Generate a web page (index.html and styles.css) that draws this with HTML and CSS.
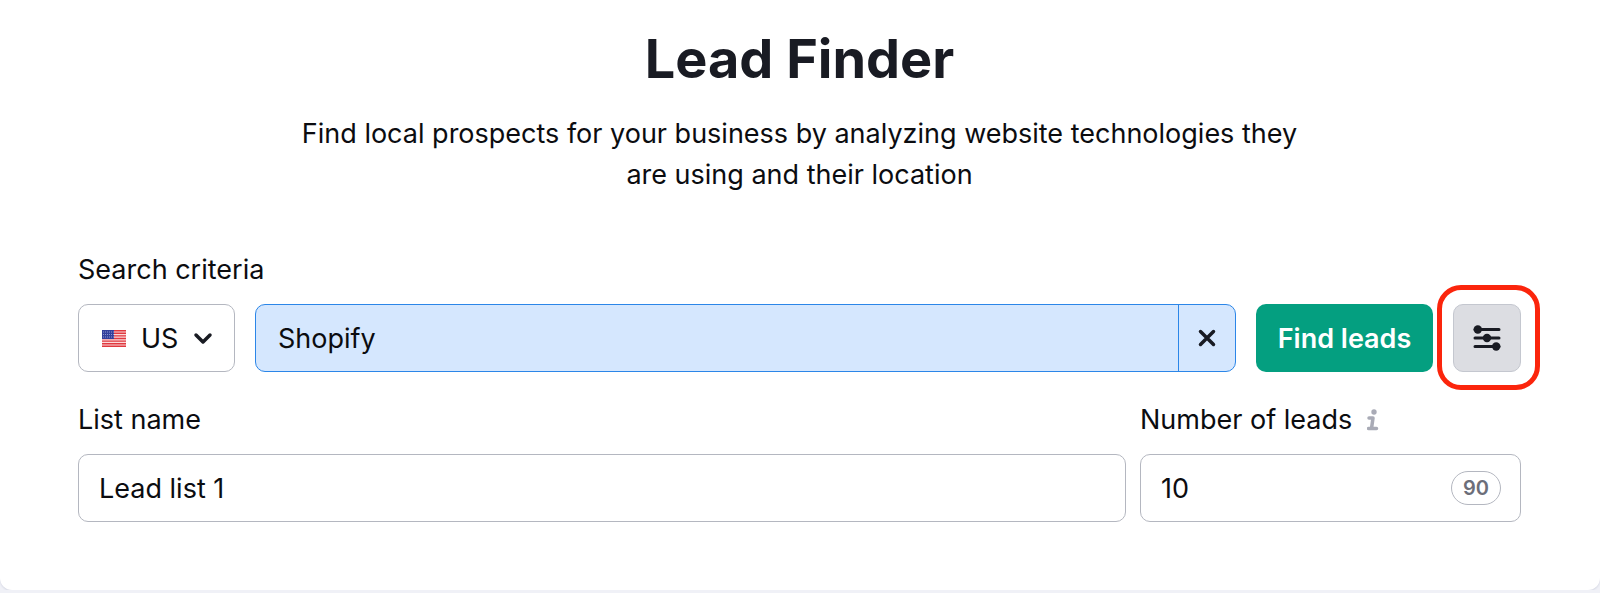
FILE: index.html
```html
<!DOCTYPE html>
<html lang="en">
<head>
<meta charset="utf-8">
<meta name="viewport" content="width=device-width, initial-scale=1">
<title>Lead Finder</title>
<link rel="stylesheet" href="styles.css">
</head>
<body>
<main class="card">
  <header class="intro">
    <h1 class="title">Lead Finder</h1>
    <p class="subtitle">Find local prospects for your business by analyzing website technologies they are using and their location</p>
  </header>
  <form class="form">
    <div class="field">
      <label class="label" for="criteria">Search criteria</label>
      <div class="search-row">
        <div class="country">
          <svg class="flag" viewBox="0 0 24 17" aria-hidden="true">
            <rect width="24" height="17" fill="#fbd9da"/>
            <path d="M0 .7h24M0 3.300h24M0 5.900h24M0 8.500h24M0 11.100h24M0 13.700h24M0 16.300h24" stroke="#e0393f" stroke-width="1.4"/>
            <rect width="12" height="9" fill="#34409c"/>
            <path d="M1 2h11M1 4.500h11M1 7h11" stroke="#8d97cf" stroke-width="1" stroke-dasharray="1 1"/>
          </svg>
          <select class="control country-select" aria-label="Country">
            <option>US</option>
          </select>
          <svg class="chevron" viewBox="0 0 20 14" aria-hidden="true"><path d="M3 3l7 7 7-7"/></svg>
        </div>
        <div class="criteria">
          <input class="criteria-input" id="criteria" type="text" value="Shopify">
          <button class="clear" type="button" aria-label="Clear">
            <svg class="clear-icon" viewBox="0 0 20 20" aria-hidden="true"><path d="M3.500 3.500l13 13M16.500 3.500l-13 13"/></svg>
          </button>
        </div>
        <button class="find" type="submit">Find leads</button>
        <div class="settings-wrap">
          <button class="settings" type="button" aria-label="Settings">
            <svg class="settings-icon" viewBox="0 0 28 28" aria-hidden="true">
              <path d="M2 5.500h24M2 14h24M2 22.500h24"/>
              <circle cx="4.800" cy="5.500" r="4.200"/><circle cx="14" cy="14" r="4.200"/><circle cx="23.200" cy="22.500" r="4.200"/>
            </svg>
          </button>
          <span class="highlight"></span>
        </div>
      </div>
    </div>
    <div class="details-row">
      <div class="field field-name">
        <label class="label" for="list-name">List name</label>
        <input class="control" id="list-name" type="text" value="Lead list 1">
      </div>
      <div class="field field-count">
        <div class="label-line">
          <label class="label" for="lead-count">Number of leads</label>
          <svg class="info" viewBox="0 0 12 22" aria-hidden="true">
            <circle cx="7" cy="3" r="2.700"/><path d="M2 9H6L4.500 19.500M1.500 19.500h8"/>
          </svg>
        </div>
        <div class="count">
          <input class="control" id="lead-count" type="text" inputmode="numeric" value="10">
          <span class="badge">90</span>
        </div>
      </div>
    </div>
  </form>
</main>
</body>
</html>
```
FILE: styles.css
```css
* {
  box-sizing: border-box;
}

body {
  margin: 0;
  background: #f0f1f7;
  color: #0b0c10;
  font: 27px/41px Inter, "Liberation Sans", sans-serif;
}

.card {
  padding: 27px 79px 68px 78px;
  background: #fff;
  border-radius: 0 0 12px 12px;
  box-shadow: 0 1px 2px #d3d5e2;
}

.intro {
  max-width: 1040px;
  margin: 0 auto 54px;
  text-align: center;
}

.title {
  margin: 0 0 22px;
  color: #191b23;
  font-size: 54px;
  line-height: 64px;
  font-weight: 700;
}

.subtitle {
  margin: 0;
}

.form {
  display: flex;
  flex-direction: column;
  gap: 27px;
}

.field {
  display: flex;
  flex-direction: column;
  gap: 14px;
  min-width: 0;
}

.label {
  line-height: 41px;
}

.label-line {
  display: flex;
  align-items: center;
  gap: 15px;
}

.info {
  width: 12px;
  height: 22px;
  fill: #a9abb6;
}

.info path {
  fill: none;
  stroke: #a9abb6;
  stroke-width: 3.5;
  stroke-linecap: round;
  stroke-linejoin: round;
}

.search-row {
  display: flex;
  gap: 20px;
}

.control {
  width: 100%;
  height: 68px;
  padding: 0 20px;
  border: 1px solid #b4b7c0;
  border-radius: 10px;
  background: #fff;
  color: inherit;
  font: inherit;
}

.country {
  position: relative;
  flex: 0 0 157px;
}

.country-select {
  appearance: none;
  padding-left: 62px;
}

.flag {
  position: absolute;
  left: 24px;
  top: 26px;
  width: 24px;
  height: 17px;
}

.chevron {
  position: absolute;
  right: 22px;
  top: 28px;
  width: 20px;
  height: 14px;
  pointer-events: none;
}

.chevron path,
.clear-icon path {
  fill: none;
  stroke: #191b23;
  stroke-width: 3.5;
  stroke-linecap: round;
  stroke-linejoin: round;
}

.criteria {
  display: flex;
  flex: 1;
  min-width: 0;
  height: 68px;
  border: 1px solid #2b86e8;
  border-radius: 10px;
  background: #d5e7fe;
  overflow: hidden;
}

.criteria-input {
  flex: 1;
  min-width: 0;
  padding: 0 22px;
  border: 0;
  background: transparent;
  color: inherit;
  font: inherit;
}

.clear {
  display: flex;
  align-items: center;
  justify-content: center;
  width: 57px;
  padding: 0;
  border: 0;
  border-left: 1px solid #2b86e8;
  background: transparent;
}

.clear-icon {
  width: 20px;
  height: 20px;
}

.find {
  flex: 0 0 177px;
  height: 68px;
  padding: 0;
  border: 0;
  border-radius: 10px;
  background: #049f80;
  color: #fff;
  font: inherit;
  font-weight: 600;
}

.settings-wrap {
  position: relative;
  flex: 0 0 68px;
}

.settings {
  display: flex;
  align-items: center;
  justify-content: center;
  width: 100%;
  height: 68px;
  padding: 0;
  border: 1px solid #c4c7cf;
  border-radius: 10px;
  background: #dcdde2;
}

.settings-icon {
  width: 28px;
  height: 28px;
  fill: #191b23;
}

.settings-icon path {
  stroke: #191b23;
  stroke-width: 3;
  stroke-linecap: round;
}

.highlight {
  position: absolute;
  inset: -19px -19px -18px -16px;
  border: 5px solid #fb250c;
  border-radius: 24px;
  pointer-events: none;
}

.details-row {
  display: flex;
  gap: 14px;
}

.field-name {
  flex: 1;
}

.field-count {
  flex: 0 0 381px;
}

.count {
  position: relative;
}

.badge {
  position: absolute;
  right: 20px;
  top: 17px;
  width: 50px;
  height: 34px;
  border: 1px solid #b4b7c0;
  border-radius: 17px;
  color: #6c6e79;
  font-size: 20px;
  line-height: 32px;
  font-weight: 600;
  text-align: center;
}
```
